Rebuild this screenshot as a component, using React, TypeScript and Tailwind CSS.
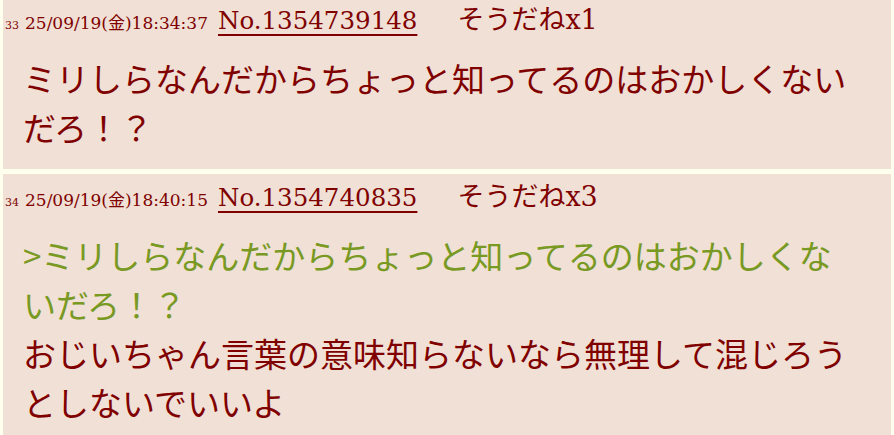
import React from "react";

const posts = [
  {
    num: "33",
    date: "25/09/19(金)18:34:37",
    no: "No.1354739148",
    sod: "そうだねx1",
    lines: [{ quote: false, text: "ミリしらなんだからちょっと知ってるのはおかしくないだろ！？" }],
  },
  {
    num: "34",
    date: "25/09/19(金)18:40:15",
    no: "No.1354740835",
    sod: "そうだねx3",
    lines: [
      { quote: true, text: ">ミリしらなんだからちょっと知ってるのはおかしくないだろ！？" },
      { quote: false, text: "おじいちゃん言葉の意味知らないなら無理して混じろうとしないでいいよ" },
    ],
  },
];

const App = () => {
  return (
    <main className="bg-[#FFFFEE] h-screen overflow-hidden px-[3px] pt-0 text-[#800000]">
      <div className="flex flex-col gap-[5px] mt-[-3px]">
        {posts.map((p) => (
          <section key={p.num} className="bg-[#F0E0D6] pt-2 pb-[17px]">
            {/* header */}
            <div className="h-[30px] leading-[30px] whitespace-nowrap pl-[2px] font-['DejaVu_Serif','Noto_Sans_CJK_JP',serif]">
              <span className="text-[11px]">{p.num}</span>
              <span className="text-[17px] ml-[6px]">{p.date}</span>
              <a className="text-[24.5px] ml-[10px] underline decoration-2 underline-offset-[5px]">{p.no}</a>
              <span className="text-[27px] ml-[40px]">{p.sod}</span>
            </div>
            {/* body */}
            <div className="mt-[19px] ml-[20px] w-[835px] text-[33px] leading-[49px] font-['Noto_Sans_CJK_JP',sans-serif]">
              {p.lines.map((l, i) => (
                <div key={i} className={l.quote ? "text-[#789922]" : ""}>
                  {l.text}
                </div>
              ))}
            </div>
          </section>
        ))}
      </div>
    </main>
  );
};

export default App;
